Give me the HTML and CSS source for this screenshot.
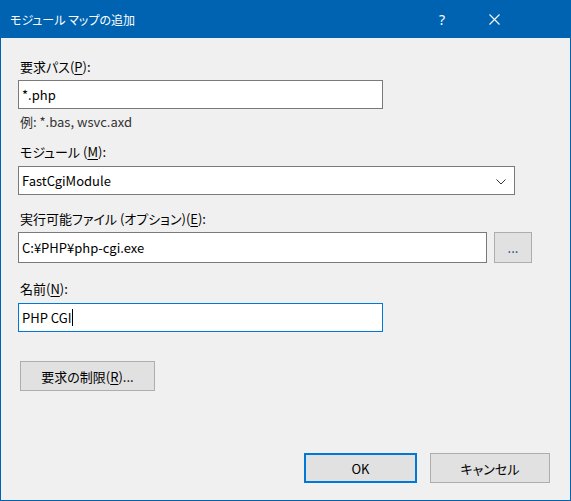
FILE: index.html
```html
<!DOCTYPE html>
<html lang="ja">
<head>
<meta charset="utf-8">
<link rel="stylesheet" href="styles.css">
</head>
<body>
<div class="window">
  <div class="titlebar">
    <span class="title">モジュール マップの追加</span>
    <span class="help">?</span>
    <span class="close"><svg width="11" height="11" viewBox="0 0 11 11"><path d="M0.5 0.5 L10.5 10.5 M10.5 0.5 L0.5 10.5" stroke="#fff" stroke-width="1.1" fill="none"/></svg></span>
  </div>
  <div class="content">
    <div class="label l1">要求パス(<u>P</u>):</div>
    <div class="field f1 w364">*.php</div>
    <div class="hint">例: *.bas, wsvc.axd</div>
    <div class="label l2">モジュール (<u>M</u>):</div>
    <div class="field select w496">FastCgiModule<svg class="chev" width="10" height="6" viewBox="0 0 10 6"><path d="M0.5 0.5 L5 5 L9.5 0.5" stroke="#333" stroke-width="1" fill="none"/></svg></div>
    <div class="label l3">実行可能ファイル (オプション)(<u>E</u>):</div>
    <div class="row">
      <div class="field f3 w468">C:¥PHP¥php-cgi.exe</div>
      <div class="btn browse">...</div>
    </div>
    <div class="label l4">名前(<u>N</u>):</div>
    <div class="field focus f4 w364">PHP CGI<span class="caret"></span></div>
    <div class="btn limit">要求の制限(<u>R</u>)...</div>
    <div class="footer">
      <div class="btn ok">OK</div>
      <div class="btn cancel">キャンセル</div>
    </div>
  </div>
</div>
</body>
</html>
```

FILE: styles.css
```css
* { box-sizing: border-box; }
html, body { margin: 0; padding: 0; }
body {
  width: 571px;
  height: 501px;
  font-family: "Noto Sans CJK JP", "Noto Sans", sans-serif;
  font-size: 13px;
  font-feature-settings: "palt";
  color: #000;
  background: #fff;
}
.window {
  width: 571px;
  height: 501px;
  background: #f0f0f0;
  border: 1px solid #0063b1;
  border-top: none;
  display: flex;
  flex-direction: column;
}
.titlebar {
  height: 38px;
  margin: 0 -1px;
  background: #0063b1;
  color: #fff;
  display: flex;
  align-items: center;
  padding-left: 10px;
  flex-shrink: 0;
}
.title { font-size: 12px; flex: 1; }
.help { font-size: 14px; width: 12px; margin-right: 41px; text-align: center; font-family: "Noto Sans", sans-serif; }
.close { width: 11px; height: 11px; margin-right: 71px; display: flex; }
.close svg { display: block; }
.content {
  flex: 1;
  padding: 21px 0 0 17px;
  display: flex;
  flex-direction: column;
  align-items: flex-start;
}
.label, .hint { height: 16px; line-height: 16px; padding-left: 2px; white-space: nowrap; }
.hint { color: #333; margin-top: 5px; }
.l2 { margin-top: 14px; }
.l3 { margin-top: 16px; }
.l4 { margin-top: 18px; }
.field {
  height: 29px;
  background: #fff;
  border: 1px solid #7a7a7a;
  padding-left: 3px;
  display: flex;
  align-items: center;
  line-height: 16px;
  white-space: nowrap;
  position: relative;
}
.f1 { margin-top: 5px; }
.select { margin-top: 6px; }
.f4 { margin-top: 6px; }
.w364 { width: 365px; }
.w496 { width: 497px; }
.w468 { width: 469px; height: 31px; }
.focus { border-color: #0078d7; }
.chev { position: absolute; right: 8px; top: 12px; }
.caret { display: inline-block; width: 1px; height: 17px; background: #000; margin-left: 1px; }
.row { display: flex; margin-top: 5px; }
.btn {
  background: #e1e1e1;
  border: 1px solid #adadad;
  display: flex;
  align-items: center;
  justify-content: center;
  white-space: nowrap;
}
.browse { width: 38px; height: 31px; margin-left: 7px; color: #1a3f8f; }
.limit { width: 135px; height: 30px; margin-top: 29px; margin-left: 2px; }
.footer {
  display: flex;
  margin-top: 62px;
  margin-left: 286px;
}
.ok { width: 113px; height: 30px; border: 2px solid #0078d7; }
.cancel { width: 120px; height: 30px; margin-left: 13px; }
u { text-decoration: underline; text-underline-offset: 2px; }
```
